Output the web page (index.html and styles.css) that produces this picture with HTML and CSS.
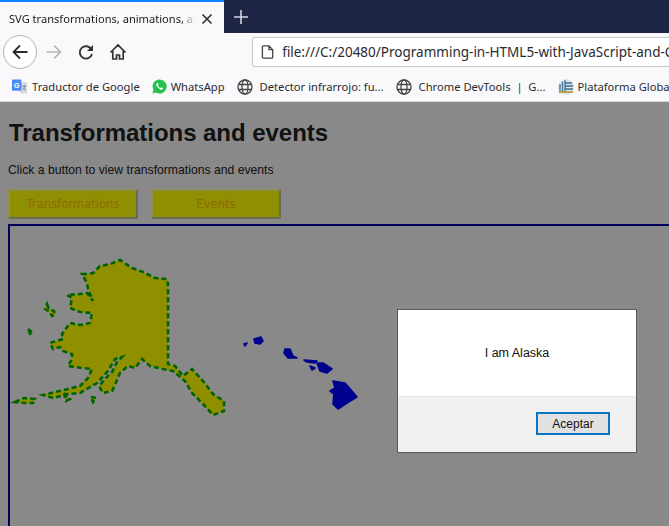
FILE: index.html
```html
<!DOCTYPE html>
<html lang="en">
<head>
    <meta charset="UTF-8">
    <meta name="viewport" content="width=device-width, initial-scale=1.0">
    <title>SVG transformations, animations, and events</title>
    <link rel="stylesheet" href="styles.css">
</head>
<body>
    <div class="tabstrip">
        <div class="tab">
            <span class="tab-title">SVG transformations, animations, and events</span>
            <svg class="tab-close" width="12" height="12" viewBox="0 0 12 12"><path d="M1.5 1.5l9 9M10.5 1.5l-9 9" stroke="#333" stroke-width="1.7" fill="none"/></svg>
        </div>
        <svg class="new-tab" width="16" height="16" viewBox="0 0 16 16"><path d="M8 1v14M1 8h14" stroke="#d4d6de" stroke-width="1.6" fill="none"/></svg>
    </div>

    <div class="toolbar">
        <div class="back">
            <svg width="18" height="18" viewBox="0 0 18 18"><path d="M16.5 9H2.5M9 2.5L2.5 9 9 15.5" stroke="#2b2b2b" stroke-width="1.8" fill="none"/></svg>
        </div>
        <svg class="tool-icon tool-forward" width="18" height="18" viewBox="0 0 18 18"><path d="M1.5 9h14M9 2.5L15.5 9 9 15.5" stroke="#b4b4b4" stroke-width="1.6" fill="none"/></svg>
        <svg class="tool-icon" width="18" height="18" viewBox="0 0 18 18"><path d="M14.5 6.5A6.2 6.2 0 1 0 15 11" stroke="#333" stroke-width="1.9" fill="none"/><path d="M16 2v6h-6z" fill="#333"/></svg>
        <svg class="tool-icon" width="18" height="18" viewBox="0 0 18 18"><path d="M1.5 9.5L9 2l7.5 7.5M3.8 8v8h3.7v-4h3v4h3.7V8" stroke="#333" stroke-width="1.7" fill="none"/></svg>
        <div class="urlbar">
            <svg width="14" height="16" viewBox="0 0 14 16"><path d="M1.5 2.5a1 1 0 0 1 1-1h6l4 4v8a1 1 0 0 1-1 1h-9a1 1 0 0 1-1-1zM8.5 1.5v4h4" stroke="#444" stroke-width="1.4" fill="none"/></svg>
            <span class="url">file:///C:/20480/Programming-in-HTML5-with-JavaScript-and-CSS3</span>
        </div>
    </div>

    <div class="bookmarks">
        <div class="bookmark">
            <svg width="16" height="16" viewBox="0 0 17 16"><path d="M7 3h9v12H9z" fill="#d5d8dc"/><path d="M11 7h4M13 6v1M14 7c-.5 2-2 3.500-3 4M11.500 8.500c.5 1 1.500 2 3 2.500" stroke="#6b7280" stroke-width=".8" fill="none"/><rect x="0" y="0" width="10" height="12" rx="1" fill="#4a8af4"/><text class="g-mark" x="5" y="9" text-anchor="middle">G</text></svg>
            <span>Traductor de Google</span>
        </div>
        <div class="bookmark">
            <svg width="15" height="15" viewBox="0 0 15 15"><path d="M7.500 .5a7 7 0 0 0-6 10.500L.5 14.500l3.600-1A7 7 0 1 0 7.500 .5z" fill="#25c04f"/><path d="M5 4c-1 .8-1 2 0 3.500s2.500 3 4 3.200c1 .1 1.800-.7 1.900-1.500L9.300 8.300l-.9.800C7.300 8.600 6.500 7.700 6 6.700l.7-.9L6 4z" fill="#fff"/></svg>
            <span>WhatsApp</span>
        </div>
        <div class="bookmark bookmark-globe">
            <svg width="16" height="16" viewBox="0 0 16 16"><g stroke="#444" stroke-width="1.300" fill="none"><circle cx="8" cy="8" r="7"/><ellipse cx="8" cy="8" rx="3" ry="7"/><path d="M1.500 5.500h13M1.500 10.500h13"/></g></svg>
            <span>Detector infrarrojo: fu...</span>
        </div>
        <div class="bookmark bookmark-globe">
            <svg width="16" height="16" viewBox="0 0 16 16"><g stroke="#444" stroke-width="1.300" fill="none"><circle cx="8" cy="8" r="7"/><ellipse cx="8" cy="8" rx="3" ry="7"/><path d="M1.500 5.500h13M1.500 10.500h13"/></g></svg>
            <span>Chrome DevTools &nbsp;|&nbsp; G...</span>
        </div>
        <div class="bookmark">
            <svg width="16" height="16" viewBox="0 0 16 16"><path d="M8 0a8 8 0 1 0 .1 0z" fill="#dfe6ec"/><path d="M2 14V5M4.500 14V2.500M7 14V1" stroke="#4f7fa0" stroke-width="1.500"/><path d="M7 4h7M7 7h8M7 10h8" stroke="#3d6b8a" stroke-width="1.300"/><path d="M2 13h13" stroke="#c39a35" stroke-width="1.800"/></svg>
            <span>Plataforma Global</span>
        </div>
    </div>

    <div class="page">
        <h1>Transformations and events</h1>
        <p>Click a button to view transformations and events</p>
        <div class="actions">
            <button class="action">Transformations</button>
            <button class="action">Events</button>
        </div>
        <div class="map">
            <svg class="usa" width="420" height="300" viewBox="10 225 420 300">
                <g class="alaska">
                    <path d="M82 273 87 273 93 272 100 265 110 263 120 259 132 267 143 271 155 277 167 278 168 283 168 363 175 365 183 375 192 368 203 380 213 393 224 400 224 410 213 414 203 403 192 392 185 380 173 370 163 368 150 365 142 358 135 367 128 365 120 372 115 384 112 390 103 392 99 385 105 378 112 371 117 361 122 356 115 358 108 370 97 382 80 392 68 393 53 397 43 394 68 388 80 385 88 377 92 368 82 367 68 365 72 358 72 353 63 350 60 346 53 348 50 342 63 338 62 333 70 322 80 324 90 322 92 312 80 311 70 307 72 297 67 294 80 293 87 292 93 300 88 288 87 282z"/>
                    <path d="M15 401 24 397 35 398 33 402 24 402z"/>
                    <path d="M64 392 70 398 66 400z"/>
                    <path d="M91 396 96 397 93 401z"/>
                    <path d="M28 328 33 332 30 333z"/>
                    <path d="M47 303 49 308 54 310 55 314 52 315 50 311 45 308z"/>
                </g>
                <g class="hawaii">
                    <path d="M333 380 345 382 352 390 357 396 347 402 338 408 333 403 334 393 330 390 335 387z"/>
                    <path d="M317 362 323 362 332 368 327 372 320 370z"/>
                    <path d="M304 359 317 360 315 362 307 361z"/>
                    <path d="M310 365 315 367 312 369z"/>
                    <path d="M285 348 290 348 293 355 297 357 288 357 284 352z"/>
                    <path d="M254 338 261 336 263 340 260 343 255 342z"/>
                    <path d="M244 343 247 342 245 345z"/>
                </g>
            </svg>
        </div>
    </div>

    <div class="overlay"></div>

    <div class="dialog">
        <div class="dialog-body">I am Alaska</div>
        <div class="dialog-foot">
            <button class="dialog-btn">Aceptar</button>
        </div>
    </div>
</body>
</html>
```

FILE: styles.css
```css
html, body {
    margin: 0;
    height: 100%;
    overflow: hidden;
}

body {
    position: relative;
    background-color: #f5f5f5;
    font-family: "Liberation Sans", Arial, sans-serif;
}

/* browser chrome */
.tabstrip {
    display: flex;
    align-items: center;
    height: 33px;
    background-color: #1f2544;
}

.tab {
    display: flex;
    align-items: center;
    box-sizing: border-box;
    width: 224px;
    height: 33px;
    padding: 2px 10px 0 9px;
    border-top: 2px solid #0a84ff;
    background-color: #f9f9fb;
}

.tab-title {
    width: 186px;
    overflow: hidden;
    white-space: nowrap;
    font-family: "Noto Sans", sans-serif;
    font-size: 11.1px;
    color: #1a1a1a;
    -webkit-mask-image: linear-gradient(to right, #000 172px, transparent 186px);
    mask-image: linear-gradient(to right, #000 172px, transparent 186px);
}

.tab-close {
    margin-left: 6px;
}

.new-tab {
    margin-left: 9px;
}

.toolbar {
    display: flex;
    align-items: center;
    box-sizing: border-box;
    height: 35px;
    padding: 3px 0 0 3px;
    background-color: #f9f9fb;
}

.back {
    display: flex;
    align-items: center;
    justify-content: center;
    box-sizing: border-box;
    width: 34px;
    height: 34px;
    border: 1px solid #b5b5b5;
    border-radius: 50%;
    background-color: #fff;
}

.tool-icon {
    margin-left: 14px;
}

.tool-forward {
    margin-left: 8px;
}

.urlbar {
    display: flex;
    align-items: center;
    gap: 8px;
    box-sizing: border-box;
    flex: 1;
    min-width: 0;
    height: 30px;
    margin-left: 125px;
    margin-right: -2px;
    padding-left: 8px;
    border: 1px solid #c8c8c8;
    border-radius: 2px;
    background-color: #fff;
}

.url {
    overflow: hidden;
    white-space: nowrap;
    font-family: "Noto Sans", sans-serif;
    font-size: 13.5px;
    color: #2a2a2e;
}

.bookmarks {
    display: flex;
    align-items: center;
    gap: 12px;
    box-sizing: border-box;
    height: 34px;
    padding: 4px 0 0 12px;
    border-bottom: 1px solid #d8d8d8;
    background-color: #f9f9fb;
    white-space: nowrap;
    overflow: hidden;
}

.bookmark {
    display: flex;
    align-items: center;
    gap: 4px;
    font-family: "Noto Sans", sans-serif;
    font-size: 11.2px;
    color: #2a2a2e;
}

.bookmark-globe {
    gap: 7px;
}

.g-mark {
    font-family: "Liberation Sans", sans-serif;
    font-size: 8px;
    font-weight: bold;
    fill: #fff;
}

/* page under the alert */
.page {
    padding: 0 0 0 8px;
    height: 424px;
    overflow: hidden;
}

h1 {
    margin: 17px 0 0 1px;
    font-size: 24px;
    line-height: 27px;
    letter-spacing: -0.04px;
    color: #202020;
}

p {
    margin: 17px 0 0;
    font-size: 12.2px;
    line-height: 14px;
    color: #202020;
}

.actions {
    display: flex;
    gap: 13px;
    margin-top: 12px;
}

.action {
    box-sizing: border-box;
    width: 130px;
    height: 30px;
    border: 2px solid;
    border-color: #ffff90 #c0c09a #c0c09a #ffff90;
    background-color: #ffff08;
    font-family: "DejaVu Sans", sans-serif;
    font-size: 11.6px;
    color: #ffc000;
}

.map {
    box-sizing: border-box;
    height: 320px;
    margin-top: 5px;
    border: 2px solid #00009a;
    border-bottom: 0;
    border-right: 0;
}

.usa {
    display: block;
}

.alaska path {
    fill: #ffff00;
    stroke: #00b000;
    stroke-width: 2.6;
    stroke-dasharray: 5 3;
}

.hawaii path {
    fill: #0000ff;
    stroke: #0000ff;
    stroke-width: 1.6;
    stroke-linejoin: round;
}

/* alert */
.overlay {
    position: absolute;
    top: 102px;
    left: 0;
    right: 0;
    bottom: 0;
    background-color: rgba(0, 0, 0, 0.44);
}

.dialog {
    position: absolute;
    top: 309px;
    left: 397px;
    width: 238px;
    height: 142px;
    border: 1px solid #5a5a5a;
    background-color: #fff;
}

.dialog-body {
    display: flex;
    align-items: center;
    justify-content: center;
    height: 86px;
    font-size: 12.5px;
    color: #111;
}

.dialog-foot {
    display: flex;
    justify-content: flex-end;
    box-sizing: border-box;
    height: 56px;
    padding: 15px 26px 0 0;
    border-top: 1px solid #e4e4e4;
    background-color: #f0f0f0;
}

.dialog-btn {
    box-sizing: border-box;
    width: 74px;
    height: 23px;
    padding: 0;
    border: 2px solid #0a74c4;
    background-color: #e1e1e1;
    font-family: "Liberation Sans", sans-serif;
    font-size: 12px;
    color: #111;
}
```
